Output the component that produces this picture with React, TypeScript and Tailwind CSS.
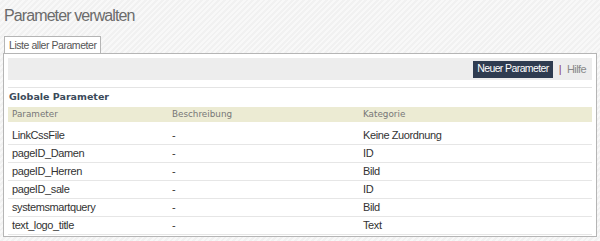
const rows = [
  { name: "LinkCssFile", desc: "-", cat: "Keine Zuordnung" },
  { name: "pageID_Damen", desc: "-", cat: "ID" },
  { name: "pageID_Herren", desc: "-", cat: "Bild" },
  { name: "pageID_sale", desc: "-", cat: "ID" },
  { name: "systemsmartquery", desc: "-", cat: "Bild" },
  { name: "text_logo_title", desc: "-", cat: "Text" },
];

export default function App() {
  return (
    <div className="w-[600px] h-[241px] overflow-hidden bg-[repeating-linear-gradient(135deg,#f8f8f8_0px,#f8f8f8_2px,#f1f1f1_2px,#f1f1f1_4px)] px-[3px] pt-[6px] font-['Liberation_Sans',Arial,sans-serif]">
      <h1 className="ml-[1px] h-[20px] text-[16px] leading-[20px] tracking-[-0.9px] text-[#6b6b6b]">Parameter verwalten</h1>

      <div className="mt-[10px] flex">
        <div className="ml-[1px] h-[17px] border border-b-0 border-[#b5b5b5] bg-white px-[4px] text-[10.5px] leading-[16px] tracking-[-0.45px] text-[#555]">
          Liste aller Parameter
        </div>
      </div>

      <div className="w-[594px] border border-[#b5b5b5] bg-white px-[4px] pt-[4px] pb-[1px]">
        <div className="flex h-[22px] items-center justify-end bg-[#ededed] pr-[6px] text-[10.5px] tracking-[-0.6px]">
          <span className="flex h-[17px] items-center bg-[#2f3c50] px-[4px] text-white">Neuer Parameter</span>
          <span className="mx-[6px] text-[11px] text-[#8a3a6a]">|</span>
          <span className="text-[11px] text-[#888]">Hilfe</span>
        </div>

        <div className="mt-[7px] border-t border-[#e4e4e4] pt-[1px]">
          <div className="h-[16px] pl-[1px] font-['DejaVu_Sans',Verdana,sans-serif] text-[9.5px] font-bold leading-[16px] text-[#3b4a5a]">
            Globale Parameter
          </div>
          <table className="mt-[2px] w-full table-fixed border-collapse text-[11px] tracking-[-0.4px]">
            <colgroup>
              <col className="w-[160px]" />
              <col className="w-[191px]" />
              <col />
            </colgroup>
            <thead>
              <tr className="h-[15px] bg-[#ecebd3] text-left font-['DejaVu_Sans',Verdana,sans-serif] text-[8.8px] tracking-normal text-[#777]">
                <th className="px-[4px] font-normal">Parameter</th>
                <th className="px-[4px] font-normal">Beschreibung</th>
                <th className="px-[4px] font-normal">Kategorie</th>
              </tr>
            </thead>
            <tbody className="text-[#333]">
              {rows.map((r, i) => (
                <tr key={r.name} className={`${i === 0 ? "h-[22px]" : "h-[18px]"} border-b border-[#e6e6e6]`}>
                  <td className={`px-[4px] ${i === 0 ? "pt-[4px]" : ""}`}>{r.name}</td>
                  <td className={`px-[4px] ${i === 0 ? "pt-[4px]" : ""}`}>{r.desc}</td>
                  <td className={`px-[4px] ${i === 0 ? "pt-[4px]" : ""}`}>{r.cat}</td>
                </tr>
              ))}
            </tbody>
          </table>
        </div>
      </div>
    </div>
  );
}
